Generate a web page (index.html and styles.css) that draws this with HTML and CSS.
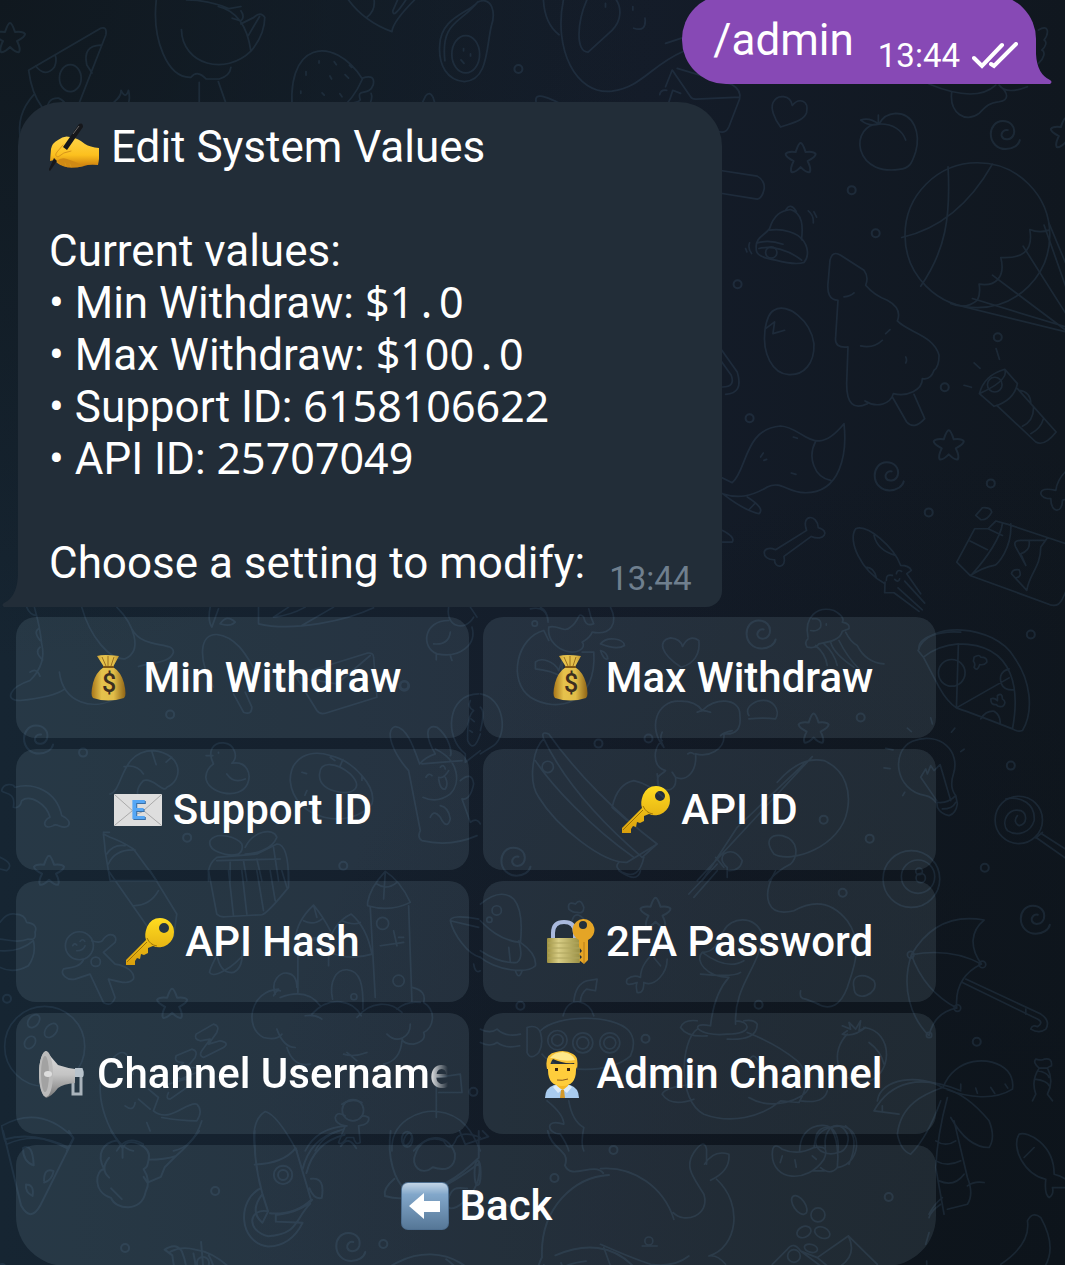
FILE: index.html
```html
<!DOCTYPE html>
<html lang="en">
<head>
<meta charset="utf-8">
<meta name="viewport" content="width=device-width, initial-scale=1">
<title>Admin chat</title>
<link rel="stylesheet" href="styles.css">
</head>
<body>
<svg class="wallpaper" viewBox="0 0 1065 1265" preserveAspectRatio="xMinYMin slice" aria-hidden="true">
  <defs>
    <path id="star" d="M0-15Q2-15 5-6Q13-7 15-4Q15-1 7 3Q11 11 9 14Q6 15 0 9Q-6 15-9 14Q-11 11-7 3Q-15-1-15-4Q-13-7-5-6Q-2-15 0-15Z"/>
    <path id="spiral" d="M2-4C-2-5-5-1-4 2C-2 7 6 6 8 0C10-8 4-13-3-13C-11-13-15-6-15 0C-15 9-8 15 0 15C7 15 13 11 14 6"/>
    <circle id="dot" r="4"/>
    <g id="mandarin"><path d="M0 0C-28-5-48 15-45 45C-40 75-5 85 22 75M0 0C35-20 60 20 50 50Q42 72 22 75M0 0C-12 15-20 30-16 62M0 0C20 15 25 45 22 75"/></g>
  </defs>
  <g>
    <use href="#star" x="10" y="38"/><use href="#star" x="800" y="158"/><use href="#star" x="1065" y="133"/>
    <use href="#star" x="948" y="445"/><use href="#star" x="49" y="870"/><use href="#star" x="172" y="1003"/>
    <use href="#star" x="813" y="728"/><use href="#star" x="655" y="912"/>
    <use href="#spiral" x="1005" y="134"/><use href="#spiral" x="889" y="475"/><use href="#spiral" x="761" y="633"/>
    <use href="#spiral" x="1035" y="918"/><use href="#spiral" x="39" y="738"/><use href="#spiral" x="516" y="860"/><use href="#spiral" x="351" y="1245"/>
    <use href="#dot" x="518" y="69"/><use href="#dot" x="851" y="190"/><use href="#dot" x="875" y="233"/><use href="#dot" x="737" y="284"/>
    <use href="#dot" x="997" y="337"/><use href="#dot" x="944" y="387"/><use href="#dot" x="749" y="418"/><use href="#dot" x="990" y="483"/>
    <use href="#dot" x="928" y="512"/><use href="#dot" x="1030" y="634"/><use href="#dot" x="1010" y="765"/><use href="#dot" x="984" y="867"/>
    <use href="#dot" x="976" y="1041"/><use href="#dot" x="860" y="717"/><use href="#dot" x="598" y="743"/><use href="#dot" x="648" y="738"/>
    <use href="#dot" x="823" y="819"/><use href="#dot" x="869" y="838"/><use href="#dot" x="842" y="892"/><use href="#dot" x="758" y="1004"/>
    <use href="#dot" x="520" y="1005"/><use href="#dot" x="645" y="1038"/><use href="#dot" x="613" y="1149"/><use href="#dot" x="888" y="1196"/>
    <use href="#dot" x="170" y="714"/><use href="#dot" x="83" y="752"/><use href="#dot" x="187" y="837"/><use href="#dot" x="343" y="865"/>
    <use href="#dot" x="404" y="685"/><use href="#dot" x="7" y="998"/><use href="#dot" x="473" y="1091"/><use href="#dot" x="215" y="1190"/>
    <use href="#dot" x="125" y="1247"/><use href="#dot" x="383" y="1243"/><use href="#dot" x="554" y="1177"/><use href="#dot" x="2" y="1267"/>
  </g>
  <!-- pizza, bird, burger, crown, avocado, elephant -->
  <g class="top" transform="scale(.4337)">
    <path d="M66 162L232 65Q247 60 244 80L163 287Q80 270 66 162M82 152Q105 180 125 155Q132 140 127 126M232 104Q190 105 200 150L212 168M110 262Q105 225 135 226Q165 240 150 277M78 218Q35 265 48 325M125 305Q122 270 135 255"/>
    <ellipse cx="162" cy="180" rx="25" ry="31"/>
    <path d="M260 305C270 280 245 270 252 250C255 235 280 230 279 208Q290 230 296 208Q305 245 275 260Q260 270 272 300Q300 285 316 305"/>
    <path d="M360 0C350 90 385 180 440 178Q455 160 475 182H505Q530 175 532 155M418 68C420 150 520 175 578 118C570 60 545 25 503 15M430 0Q480 0 528 20L555 15M578 118Q610 80 610 40Q600 25 585 40L555 55M598 38L572 82M555 25Q565 40 555 48L535 42M459 190V280L405 245L388 260M400 250Q392 270 402 292M405 250Q405 275 418 290M503 188L544 305"/>
    <path d="M803 0Q840 50 903 73Q905 50 955 0M862 0Q865 25 845 40M935 0Q905 45 905 25L916 0"/>
    <path d="M676 275C650 90 770 80 835 182C810 240 760 290 676 280Q660 290 685 305M835 180Q865 170 860 195C850 225 820 200 830 230C820 245 790 225 795 265C790 300 750 280 750 305M855 215Q865 235 810 305M705 165v8M735 140v5M770 142l5 7M805 150l5 5M760 175l4 7M795 172l8 8M693 210v5M742 214l5 5M783 216l5 7M695 245v10M722 248v8"/>
    <path d="M917 305L918 255Q930 240 955 275L980 222Q990 208 998 225L1018 290L1038 263Q1053 258 1049 305M1155 303h14"/>
    <path d="M1013 105C1015 40 1080 30 1100 5C1135-10 1142 30 1132 60C1120 110 1125 185 1070 188C1030 185 1010 150 1013 105M1025 140C1015 50 1060 55 1100 5"/>
    <ellipse cx="1073" cy="125" rx="32" ry="43"/>
    <path d="M1068 112v5M1084 124v5M1062 138l7 8"/>
    <path d="M1252 0Q1255 55 1288 80M1298 0C1275 110 1325 220 1410 210C1480 200 1500 150 1575 118M1352 0C1330 50 1325 120 1355 120L1410 70C1435 45 1430 15 1420 0M1395 8v8M1458 15v8M1460 65Q1490 75 1486 42"/>
    <path d="M1290 305L1235 235Q1232 218 1250 222Q1300 235 1385 305M1265 270l6-10M1298 265l8-18M1325 305l6-12M1518 305L1550 208L1568 215M1520 218Q1522 206 1536 208"/>
  </g>
  <!-- envelope, heart, bell, peach, basketball -->
  <g class="detail" transform="translate(665 0) scale(.3333)">
    <path d="M0 130L55 112M0 260L20 210L75 290Q80 298 92 297L222 291M35 205L200 254Q228 270 222 297L190 380Q180 402 160 394"/>
    <path d="M345 381C325 355 315 325 322 308C335 280 375 285 380 316C400 292 430 300 423 337C415 362 380 368 345 381Z"/>
    <path d="M170 512L275 528Q297 540 296 565Q290 595 275 597L170 580"/>
    <path d="M272 745C268 710 300 705 312 685C325 645 345 632 375 628C412 640 412 680 408 715C430 740 430 770 415 787C390 795 360 788 330 780C290 772 270 765 272 745M312 690C350 683 400 700 410 720M275 728Q310 718 352 732M280 745C320 735 370 750 408 780M360 630Q375 605 392 634M428 632Q445 645 443 668M445 635l8 16M252 728Q246 745 258 760M240 745l4 10"/>
    <circle cx="317" cy="757" r="17"/>
    <path d="M640 372C600 370 575 410 585 450C600 500 650 515 700 508C735 505 740 485 750 455C765 400 745 340 690 340Q655 342 640 372C680 370 710 390 720 420M640 372Q610 380 585 360Q610 350 640 372M638 345V370"/>
    <path d="M790 252Q930 310 990 255M858 275C850 340 900 370 940 340C960 320 965 310 1000 305C1030 300 1030 280 1000 255Q1020 285 1085 260M1118 90C1150 70 1150 100 1135 120C1145 125 1140 140 1128 150C1140 155 1135 175 1118 190"/>
    <circle cx="935" cy="705" r="217"/>
    <path d="M847 500C855 650 840 750 765 858M980 492C930 580 850 680 708 712M1150 690Q1120 700 1092 688C1105 760 1060 775 1005 772C1020 830 990 860 940 852Q945 880 935 900Q900 930 855 910M1135 675L1200 860M1072 738L1200 940M980 825L1200 990M920 895L1200 980M855 910L1200 995M1150 670L1200 790"/>
  </g>
  <!-- tree, egg, torch, moustache, bone, squid, crisps -->
  <g class="detail" transform="translate(700 280) scale(.3333)">
    <path d="M383 0L388-60Q395-90 420-75L490-30Q505-10 495 15Q520 45 560 60Q605 85 590 122C620 155 700 165 715 225Q715 260 700 270Q690 300 665 295C665 330 620 350 578 340C570 370 530 385 493 362M500 370Q438 400 438 310L442 200Q400 205 405 170L412 60Q375 60 383 0M480 197Q520 205 545 180M555 160L568 148M430 50Q450 48 460 38M615 230q5 10 0 18M575 350L618 425Q640 450 672 415L640 342"/>
    <path d="M220 90C260 65 330 120 340 190C342 250 310 285 265 283C215 280 185 220 193 150Q200 100 220 90M195 145L222 125L217 160L252 150"/>
    <path d="M60 205L110 275Q130 340 75 342M60 240L92 285Q105 320 66 320"/>
    <path d="M836 340Q850 285 912 267L950 310Q940 360 880 378ZM912 267Q925 300 836 340M888 375L1005 485Q1030 500 1066 455L950 325M955 330Q990 335 990 370M998 380Q1000 420 965 438M1028 415Q1020 445 990 460M886 205l10 32M820 248l18 16M790 315l22 6"/>
    <circle cx="882" cy="313" r="22"/>
    <path d="M60 590L95 607C140 570 130 445 240 437C310 440 340 540 430 430C440 520 420 640 310 637C260 635 240 600 200 620C150 650 110 655 66 640M345 483C320 530 340 590 390 600M66 640Q130 690 175 700Q195 685 140 650M162 670L145 688M180 530l8-12M190 540l8-3M278 470l12 4M272 578l14 4M66 750Q105 770 95 785H66"/>
    <path d="M225 808L318 750C300 700 350 700 353 742C390 750 370 785 332 768L250 828C260 865 220 865 222 838C180 840 180 790 225 808"/>
    <path d="M553 910C480 870 440 780 465 745C500 730 580 800 600 855Q625 855 632 870L618 880L660 940M520 765Q530 810 585 825M495 860Q520 860 527 892M553 905L552 937H580L655 993M592 922L665 988M612 902L672 968M557 900Q555 880 575 885M587 880Q590 865 603 873M582 897Q593 908 597 895"/>
    <path d="M808 885L768 845L822 745H862L885 722L922 732L1035 770L1110 795M808 885L1040 970Q1070 985 1085 955L1110 900M930 730C935 800 890 855 880 855Q850 860 808 885M905 730C900 770 860 830 815 880M862 745L905 765M808 782L860 808M825 705L845 682Q870 680 873 695Q860 720 840 718ZM1040 772L1020 800C1020 860 985 880 978 930L932 880Q935 865 955 868Q965 890 945 892M975 855L945 800Q935 780 960 780H1030M975 855L960 820Q990 810 985 782"/>
    <path d="M1110 560Q1070 590 1065 630Q1020 620 1020 640Q1025 655 1050 655C1050 700 1085 700 1085 660L1110 650"/>
  </g>
  <!-- planes, ice lolly, letter, duckling, doughnut, rabbit, rainbow -->
  <g class="detail" transform="translate(0 560) scale(.3333)">
    <path d="M80 140Q90 165 110 165M103 140Q120 200 125 250Q140 310 90 360C30 380 10 420 60 420Q160 410 195 385M115 205q-15 10 5 35M120 260q-18 15 8 38M90 335q20-15 30 12M245 140C270 230 330 300 375 295C430 270 400 190 350 140M395 205C430 270 520 240 520 275C510 310 450 305 415 318M178 335C190 430 280 450 345 415"/>
    <path d="M630 140Q622 180 635 200L655 145M775 140V190C880 215 1040 180 1120 142M820 170L865 140M820 170Q870 165 915 140M905 195L1000 140M660 190Q680 160 705 185Q690 200 660 190"/>
    <path d="M640 380C590 290 600 220 650 222C720 230 750 310 765 330M700 400L730 455Q755 465 755 440L735 395M885 345L1100 278Q1120 275 1120 290L1130 410L985 455Q960 465 950 450L885 345M890 350L1010 370L1110 285"/>
    <path d="M1345 140C1335 200 1395 215 1420 170M1410 140L1430 170M1345 180C1270 180 1260 260 1310 280C1380 295 1430 250 1415 200M1300 250Q1345 255 1350 215M1308 280v18M1350 285l5 15"/>
    <circle cx="1212" cy="376" r="15"/>
    <path d="M330 700C370 690 360 570 460 570C550 580 550 660 500 680C490 700 460 650 430 660Q400 690 420 720M372 618Q410 610 430 640M455 572L468 612M515 590L498 605"/>
    <path d="M640 610C620 570 640 545 670 547C705 550 715 590 695 608C740 600 755 640 742 670C720 720 620 700 617 650Q618 625 640 610M618 585h20M680 640Q700 670 735 655M655 575v2"/>
    <path d="M870 660C870 590 930 565 990 585C1060 600 1130 680 1115 730C1050 810 880 780 870 660M958 640C960 600 1010 605 1050 640C1090 680 1060 700 1020 695C980 690 955 670 958 640M905 635l14 4M990 590l14 10M1020 615l8-18M1085 645v14M920 690l-6 14M1010 745l14-4M1080 720h18"/>
    <path d="M1225 630C1180 580 1150 510 1185 498C1220 500 1240 560 1258 610Q1275 590 1305 580C1270 520 1280 490 1310 500C1350 530 1355 580 1350 585M1305 565C1380 600 1380 670 1350 700Q1310 730 1268 710M1225 630L1260 810Q1250 830 1265 840Q1350 860 1430 825M1380 660Q1415 630 1420 670Q1410 720 1385 715L1410 785Q1430 770 1440 790M1290 770Q1300 745 1320 770Q1340 810 1350 775Q1345 740 1320 735M1277 650q8-15 18-5M1320 620q10-12 15 5M1315 650Q1330 655 1345 630M1315 655Q1320 690 1335 685Q1345 670 1335 650M1265 610L1385 600"/>
    <path d="M1435 400C1340 400 1330 530 1395 580V605L1440 570M1410 420Q1400 440 1420 450Q1400 465 1402 540Q1420 580 1440 520M1412 475l10 8M1408 510l8 5"/>
    <path d="M40 740C50 690 5 700 5 690C10 665 40 670 45 680C100 665 170 690 185 765Q215 780 205 795C190 810 170 785 160 795C130 810 125 780 150 770C140 730 90 700 65 720Q60 745 40 740"/>
    <path d="M315 870L330 960L470 960L400 865Q360 840 330 830L310 820Q315 860 315 870M320 880Q340 850 375 855M325 910Q345 865 405 868M310 815h18"/>
    <path d="M625 930Q630 905 650 890L770 880L830 850Q865 850 865 960M625 960V930M715 880C680 890 620 870 630 840C650 810 710 830 725 850Q730 870 715 880M735 860C760 810 820 800 830 830C815 870 760 880 735 880M650 900L840 895M690 905V960M730 900L740 960M770 895L785 960M820 860L835 960M0 890Q45 910 20 930L0 925"/>
  </g>
  <!-- cauldron, jellyfish, cloud, canoe, guitar, fishing rod -->
  <g class="detail" transform="translate(480 600) scale(.3333)">
    <path d="M150 25Q200 15 203 65M180 20Q200 30 203 60M190 90C110 110 80 240 150 290C230 340 350 310 340 155M340 155H305M190 90L205 120M205 80C230 70 250 100 270 80C300 60 290 30 310 50Q315 80 340 70Q330 50 325 25M335 95C390 105 415 70 390 20M205 80Q200 120 240 145C290 170 320 140 305 125Q330 110 335 95M165 185C180 170 220 180 235 210L245 180V230Q215 210 165 205ZM360 130C380 105 430 115 432 135Q410 150 360 130M360 150Q380 155 382 175Q370 180 360 150"/>
    <circle cx="163" cy="69" r="8"/>
    <path d="M602 200C540 160 530 120 570 112Q600 115 606 138Q625 100 655 120C660 160 640 190 602 200"/>
    <path d="M982 110C970 50 1010 15 1060 30Q1095 50 1085 65Q1110 70 1105 85L1085 92C1080 120 1040 125 1015 130Q1005 145 980 140Q970 125 982 115M995 55Q1025 50 1020 80Q1010 95 990 90M1037 70v4M1005 135Q1035 160 1040 195M1030 130Q1060 155 1070 195M1050 125Q1060 160 1120 200M1075 120Q1100 170 1135 205M1095 95Q1110 125 1130 135Q1155 185 1210 190"/>
    <path d="M550 440C500 380 530 300 595 302Q645 300 665 330C700 290 780 290 778 345Q785 405 730 400C735 450 680 470 645 460C650 510 620 545 585 530C590 570 560 575 535 560C520 520 550 520 555 510Q520 500 525 455Q530 430 545 420M550 440Q535 415 545 395M650 335Q665 325 690 335M755 390Q730 395 720 405M535 560L530 520M640 460Q630 452 622 460M585 530l-10-15M805 345Q790 320 830 302C880 290 900 330 885 355Q850 350 805 355"/>
    <path d="M190 415Q180 390 205 400C290 520 410 640 530 730L485 770C380 680 260 560 190 415C160 440 140 540 175 590C230 680 370 790 440 785L530 730M165 480C210 550 330 680 460 770M395 620Q410 550 460 540Q510 550 560 600M395 620L440 660M415 785Q400 800 425 815Q475 840 490 770"/>
    <circle cx="202" cy="499" r="17"/>
    <path d="M650 840L995 468M665 840L770 680L970 490M890 545Q960 465 1030 480C1100 510 1110 580 1100 630C1080 740 930 790 880 760C850 720 870 700 905 705C960 720 950 770 930 790Q890 810 865 840M705 770L730 800M740 800Q715 780 730 760Q760 740 785 780Q780 810 745 810M740 830v-30"/>
    <path d="M0 280C70 290 85 400 40 435L0 460M0 320Q15 330 0 390"/>
    <path d="M1315 145C1310 110 1380 90 1440 95"/>
  </g>
  <!-- pizza wedge, bulb, lollipop, eight ball, umbrella, palm, sweet -->
  <g class="detail" transform="translate(860 600) scale(.3333)">
    <path d="M188 170L172 150C200 60 400 70 460 170C510 240 520 330 485 390Q470 395 455 385C475 280 470 130 293 130Q230 135 188 170L235 260Q260 305 287 322Q340 340 455 385M293 130L287 322L445 232M445 205Q410 215 422 250Q430 270 460 268M360 355Q375 330 400 332Q420 345 418 368M340 170Q355 160 360 170Q380 170 378 185Q370 195 357 192Q350 215 340 200Q345 190 338 182ZM410 285Q425 275 425 295Q440 305 425 318Q410 320 407 312Q390 315 390 295Q400 290 410 300Z"/>
    <circle cx="273" cy="217" r="40"/>
    <path d="M225 605Q215 590 195 585C100 570 90 450 155 422C240 390 300 455 278 520Q265 560 285 585M228 600L180 530L195 505L200 520L210 495L220 510L238 492L270 600M228 605Q260 610 285 585L290 610Q285 640 265 645Q240 640 230 620ZM245 625Q275 625 285 605M75 443l22 5M70 502l18 2M132 575l-6 10M282 383l-10 12M310 446l-10 7M140 383l12 10M210 352l5 18"/>
    <circle cx="474" cy="658" r="71"/>
    <path d="M470 645Q455 665 475 675C500 670 500 640 480 630C440 620 420 665 440 690C470 710 510 695 520 660C525 610 480 585 435 595M540 698L625 752M528 712L625 780M525 712L545 695"/>
    <circle cx="152" cy="835" r="85"/><circle cx="172" cy="828" r="50"/><circle cx="175" cy="812" r="10"/><circle cx="180" cy="832" r="14"/>
    <path d="M152 1062C200 980 270 940 370 958C330 990 325 1040 362 1090Q280 1130 288 1222Q220 1235 205 1305C150 1250 120 1160 152 1062Q270 1040 362 1090M152 1062Q190 1170 288 1222M315 1135L540 1240Q570 1260 555 1285Q535 1300 510 1285Q515 1270 530 1278Q550 1265 530 1255L305 1145M495 1225v15"/>
    <circle cx="150" cy="1062" r="10"/><circle cx="365" cy="1091" r="10"/><circle cx="290" cy="1222" r="10"/><circle cx="205" cy="1303" r="8"/>
    <path d="M247 1460C280 1370 390 1360 440 1410Q460 1435 455 1465C400 1500 320 1490 260 1467M300 1450v15M345 1462l5 15M390 1460l12 18M433 1450l8 12M525 1375Q545 1380 550 1375Q575 1370 572 1395Q560 1400 560 1402Q580 1440 560 1480L575 1500M560 1402H535Q515 1385 525 1375M535 1402Q510 1440 525 1480L515 1500M530 1410Q560 1415 565 1430M522 1435Q560 1440 565 1455"/>
    <path d="M245 1460C180 1420 60 1430 50 1500M245 1460C190 1480 120 1510 110 1600Q120 1650 150 1660Q200 1610 240 1500M245 1460Q320 1480 385 1560Q405 1610 385 1640Q320 1640 270 1550M260 1490Q230 1600 225 1700L250 1840M280 1560L320 1730Q340 1780 320 1810L260 1825M225 1620Q255 1640 285 1620M225 1680Q260 1700 300 1680M235 1740Q280 1760 310 1720M320 1755Q340 1740 370 1745M245 1790Q220 1810 205 1840"/>
    <path d="M475 1600C500 1590 580 1630 580 1720Q600 1725 615 1735M475 1600C450 1640 490 1720 555 1735Q550 1780 565 1790Q580 1780 575 1760L615 1760M490 1670L520 1640"/>
    <path d="M500 1860Q515 1830 540 1850Q590 1940 550 2000M500 1860Q510 1930 420 1990"/>
  </g>
  <!-- castle, gingerbread, cupcake, planet, moon, sleeper, astronaut -->
  <g class="detail" transform="translate(0 870) scale(.3333)">
    <path d="M325 0L440 165M450 0L530 130L520 200M400 105Q450 105 475 60M625 0L650 130Q660 140 675 138L785 132Q800 130 865 50V0M685 0L700 135M725 0L740 130M770 0L790 120M810 0L825 90M845 0L860 50"/>
    <path d="M0 155Q20 125 45 130Q75 130 80 155Q115 160 105 185Q110 210 85 205C50 220 20 205 0 205M0 240Q60 245 100 210Q110 250 85 285Q40 310 0 290"/>
    <circle cx="238" cy="225" r="42"/><circle cx="287" cy="273" r="14"/>
    <path d="M275 210Q305 220 310 205C330 180 355 195 345 215L310 245Q335 270 345 280C380 285 405 305 400 325C385 345 350 330 325 325L345 380Q335 410 310 395L270 310L225 325C200 330 180 310 190 295C200 290 235 295 250 268M218 225q5-10 12-2M240 212q8-10 14 0M230 240Q250 240 255 225"/>
    <path d="M660 235Q630 290 628 305C640 325 700 290 735 245M650 250Q660 310 700 305Q730 290 725 240"/>
    <path d="M893 365V210Q930 210 950 205M885 205Q890 150 940 103Q970 140 990 180M890 195Q930 210 975 195M910 150Q940 165 965 145M940 103L950 140M985 285V220Q1000 155 1053 130Q1100 170 1115 250Q1050 270 990 245M1025 150Q1060 165 1080 155M1102 95Q1110 50 1155 2Q1200 30 1230 95Q1170 125 1102 105ZM1130 40Q1160 60 1190 35M1155 5L1150 85M1110 110L1125 380M1225 105L1235 395M997 385C985 330 1010 295 1040 297C1080 300 1090 340 1088 415M1140 225L1210 215M1180 180L1190 225M1195 200h15"/>
    <circle cx="1147" cy="158" r="18"/><circle cx="1195" cy="330" r="17"/><circle cx="1061" cy="378" r="9"/>
    <path d="M825 370C810 330 840 305 860 307Q890 310 890 350M835 355C750 360 730 470 790 500Q830 510 845 490M820 375Q830 355 840 360M840 380Q920 350 960 405M915 435Q945 430 965 445M935 430C990 370 1060 390 1083 435M1070 440C1110 390 1170 390 1205 425M1190 415Q1220 390 1260 395M1235 350Q1280 360 1270 395C1310 420 1300 470 1270 485Q1280 510 1240 520Q1210 520 1205 505M1160 490C1190 520 1230 500 1230 460M830 475Q850 530 885 530M860 530Q880 590 930 580M1205 510Q1200 570 1150 580M1030 550Q1060 560 1100 545M1040 545L1070 570"/>
    <path d="M1435 145Q1350 130 1350 150C1360 190 1400 250 1440 260M1350 150L1435 170M1420 280Q1425 310 1440 300"/>
    <circle cx="134" cy="527" r="120"/>
    <ellipse cx="101" cy="451" rx="15" ry="22" transform="rotate(40 101 451)"/><ellipse cx="153" cy="479" rx="16" ry="24" transform="rotate(40 153 479)"/><ellipse cx="90" cy="515" rx="15" ry="20" transform="rotate(35 90 515)"/>
    <path d="M588 490L640 460Q660 465 650 485L625 520L660 510Q690 515 670 530L610 560Q595 555 605 540L630 505L600 510Q580 505 588 490M528 555L575 535Q595 540 585 560L560 590L580 590Q600 590 590 605L540 625Q520 615 530 600L550 575Q520 575 528 555M505 640L555 625Q575 630 560 650L510 685Q495 685 505 665"/>
    <path d="M340 560Q370 530 385 560L400 610M305 610C285 700 340 830 400 840M375 705Q400 725 405 695M445 655L475 680L460 720C510 760 560 690 590 700Q610 720 590 750Q540 750 485 740M440 755L450 780M605 750Q580 830 520 840M415 685L450 715M350 840Q380 790 430 820"/>
    <path d="M5 765Q120 700 220 800L200 840M5 765Q10 800 20 820Q110 780 205 830M765 840Q750 750 795 722Q830 730 890 840M915 840Q950 770 1040 765M945 840Q970 790 1030 775"/>
    <circle cx="1058" cy="718" r="32"/>
    <path d="M1035 735Q1010 720 1005 740Q1005 760 1035 765L1015 815Q1025 825 1040 800H1060Q1065 825 1080 815L1075 765Q1110 760 1105 740Q1090 730 1080 740M1025 700Q1055 680 1085 695M1175 840C1170 750 1260 715 1310 722C1390 730 1420 790 1440 840M1308 640V740M1310 620L1380 610L1385 665L1315 665M1240 840Q1280 790 1330 810Q1350 850 1370 800Q1390 780 1440 800"/>
    <ellipse cx="1222" cy="805" rx="10" ry="20" transform="rotate(25 1222 805)"/>
  </g>
  <!-- ufo, carrot, submarine, swan, strawberry -->
  <g class="detail" transform="translate(480 870) scale(.3333)">
    <path d="M0 100Q60 50 100 85Q130 120 120 215C60 210 20 170 0 150M120 215Q170 250 165 285C140 310 50 300 0 260M115 210Q130 260 110 275Q60 280 0 240M105 300Q115 330 125 300M85 230l5 45"/>
    <circle cx="49" cy="119" r="14"/><circle cx="27" cy="147" r="8"/>
    <path d="M265 115Q260 90 285 100Q300 80 310 110Q310 130 290 125Q275 125 265 115M275 150Q285 115 315 150M560 265C560 310 520 350 490 335Q490 370 470 365Q465 345 470 335Q430 350 440 325Q460 310 480 320C480 290 500 260 530 240M520 260L540 285M625 70L710-20M640 80L710 0"/>
    <path d="M885 0C840 80 860 140 940 120C1010 80 1060 100 1100 150C1150 220 1120 290 1100 350Q1070 430 1010 400M1120 350C1110 310 1150 305 1180 330C1200 370 1120 400 1120 350M960 360Q955 385 975 385L1015 400M415 0Q470 40 480 0"/>
    <path d="M140 470Q170 460 180 485Q190 520 175 545Q150 570 140 545ZM180 480C230 430 400 430 445 480Q470 510 450 555C390 610 230 610 185 550M248 435Q260 390 295 393Q330 400 340 435M280 393Q285 340 320 330L350 325L345 360L318 355Q300 370 300 393M0 475Q30 490 50 475Q75 500 120 490M0 515Q30 530 50 515Q75 535 118 525"/>
    <circle cx="231" cy="508" r="29"/><circle cx="231" cy="508" r="17"/><circle cx="307" cy="516" r="30"/><circle cx="307" cy="516" r="18"/><circle cx="388" cy="516" r="30"/><circle cx="388" cy="516" r="18"/>
    <path d="M690 465Q700 370 745 320C680 320 640 270 665 245C700 245 710 220 730 180C750 140 820 130 845 190C840 290 760 340 765 460M665 245Q740 300 790 270M660 310Q760 320 780 305M690 465C620 450 650 500 740 490C820 490 810 450 765 450M650 475C600 510 590 690 670 730C750 760 840 740 900 690L955 695Q1000 620 950 570Q890 520 800 485M600 470Q610 445 650 450M600 470Q620 500 680 495M740 505Q830 510 830 460Q820 445 790 450M805 680C870 720 970 690 985 650M960 690Q1030 700 1040 660M545 670Q550 650 640 640M545 670Q570 710 640 685M805 570Q820 540 835 575"/>
    <path d="M1100 490C1050 540 1060 630 1150 635C1240 620 1240 480 1150 470M1085 465L1110 475L1105 455L1125 475L1140 450L1135 480L1155 470Q1120 500 1085 490L1100 480M1165 515Q1200 540 1210 580"/>
    <path d="M200 690Q250 730 250 760C190 740 200 790 240 790Q260 820 265 840M265 690Q275 750 310 770Q300 820 310 840M1180 720C1230 630 1320 610 1440 660M1180 720L1255 730M1205 705v20"/>
    <use href="#mandarin" x="1050" y="770"/>
  </g>
  <!-- rocket, tree, earth, mushroom, hotdog -->
  <g class="low" transform="translate(0 1130) scale(.3827)">
    <path d="M8 0L55 195Q80 240 105 195L192 20L180 0M12 22Q90 0 175 45M60 45Q85 30 88 90Q60 80 60 45M115 130Q115 95 140 105Q135 130 115 135M68 140Q90 140 85 170Q65 160 68 140"/>
    <path d="M290 0L320 45Q330 20 365 35Q395 50 388 75Q430 75 460 65Q490 40 520 0M320 45V70M388 75C385 90 385 95 375 100Q395 130 380 160C370 215 300 205 290 175C240 160 250 100 272 100C250 60 270 30 305 25M285 70Q260 100 285 122M290 150L318 178M385 135L420 120L430 95L460 65M375 120L385 135"/>
    <path d="M665 0Q660 100 700 210C650 200 640 260 700 275C780 270 770 230 810 190M772 45L812 180Q770 220 705 215M665 88Q740 85 772 45M680 150C620 180 620 290 700 302Q760 300 790 240L720 237V220Q790 210 815 180M812 125Q850 120 840 175Q820 180 808 150M790 100Q810 20 885 0M800 110Q820 30 900 10M890 40Q910 10 930 45M685 165Q650 210 685 240L700 210"/>
    <circle cx="739" cy="115" r="24"/><circle cx="739" cy="115" r="13"/>
    <path d="M1020 0C1010 70 1030 130 1060 155Q1150 170 1250 70V0M1030 125Q1000 150 1005 170Q1100 200 1250 85M1085 60C1100 10 1170 0 1188 60C1190 100 1160 105 1130 95C1100 120 1070 90 1085 60M1200 0L1215 35L1275 15L1260 0M1250 80C1270 170 1150 240 1170 180C1180 140 1200 150 1220 150"/>
    <ellipse cx="1063" cy="22" rx="14" ry="20"/><ellipse cx="1247" cy="110" rx="8" ry="32"/>
    <path d="M1430 0C1440 50 1490 50 1475 90C1490 130 1550 80 1575 110M430 310Q460 290 475 315Q490 350 490 405M430 310L450 325Q455 370 470 405M445 315Q475 300 510 310Q580 320 640 405M505 320Q515 360 510 405M525 290L530 350M545 325Q570 370 555 405M590 350Q580 380 585 405"/>
    <circle cx="530" cy="345" r="16"/>
    <path d="M110 400C130 340 220 340 238 405M120 375Q145 380 135 400M210 370Q215 400 230 405M960 405C1060 290 1200 300 1260 405M1165 335Q1200 360 1230 405M1135 390l14-16M1415 330C1410 200 1500 120 1590 115M1415 330Q1390 380 1415 405M1450 325C1530 290 1600 300 1650 350M1420 350L1440 405Q1440 350 1530 340M1465 345L1480 390M1280 200Q1340 175 1345 230"/>
  </g>
  <!-- whale, seeds, gift -->
  <g class="detail" transform="translate(600 1100) scale(.3333)">
    <path d="M0 203C100 195 190 260 220 355M218 335C250 370 330 345 310 280C280 230 250 200 280 155Q310 110 318 145V190M312 190Q340 145 385 160Q390 210 330 238M348 235C430 310 410 440 325 465Q350 460 375 490M0 430Q90 470 150 490Q220 500 265 465M10 440L30 495M125 435h45"/>
    <circle cx="145" cy="420" r="12"/>
    <path d="M515 160Q515 120 545 145Q590 165 640 140Q690 130 670 175C620 250 515 240 515 160M545 165l-6 20M583 177l4 22M635 165l12 10M597 150C600 70 670 65 690 80C790 50 790 190 710 200Q690 225 660 200M640 140Q645 90 690 80C710 110 715 160 710 200M735 75Q780 110 745 190M635 210H670"/>
    <ellipse cx="596" cy="312" rx="17" ry="32" transform="rotate(-35 596 312)"/><ellipse cx="610" cy="393" rx="22" ry="16" transform="rotate(-25 610 393)"/><ellipse cx="665" cy="395" rx="24" ry="16" transform="rotate(25 665 395)"/><ellipse cx="631" cy="442" rx="20" ry="12" transform="rotate(15 631 442)"/><circle cx="652" cy="342" r="21"/><circle cx="580" cy="465" r="19"/>
    <path d="M515 490L560 445Q580 420 600 450L650 470L743 405L830 490M650 470L680 495M743 405Q770 460 720 495M600 450L660 495M985 350Q990 330 1020 310M975 430L985 395M978 480v15"/>
  </g>
</svg>

<main class="chat">
  <article class="bubble bubble-out">
    <p class="text">/admin</p>
    <footer class="meta"><time>13:44</time>
      <svg class="ticks" viewBox="0 0 46 28" role="img" aria-label="Read"><path d="M2 16L10 24L30 3M19 22L22 24L44 2"/></svg>
    </footer>
    <svg class="tail tail-out" viewBox="0 0 16 40" aria-hidden="true"><path d="M0 0V40H14Q17 38 14 36Q1 30 0 10Z"/></svg>
  </article>

  <article class="bubble bubble-in">
    <div class="text">
      <p class="title"><svg class="emoji" viewBox="0 0 50 48" aria-hidden="true">
        <defs><linearGradient id="skin" x2="0" y2="1"><stop offset="0" stop-color="#ffd54a"/><stop offset=".6" stop-color="#fcc01e"/><stop offset="1" stop-color="#c8780c"/></linearGradient></defs>
        <path fill="url(#skin)" d="M1 38L2 26Q3 20 9 17Q15 12 21 14Q29 15 36 21Q41 24 50 25Q51 33 49 42Q40 41 35 43Q22 46 14 43Q8 41 6 37Z"/>
        <path fill="#d08a14" d="M8 38Q12 34 18 36Q28 39 35 43Q22 46 14 43Z"/>
        <path fill="none" stroke="#d8951a" stroke-linecap="round" d="M14 22L8 29Q5 33 9 34Q14 29 22 28M17 43L16 40M22 44L21 41"/>
        <path fill="#16171b" d="M14 24L30 1Q34-1 34 4L18 27ZM5 35L8 38L1 48Q0 48 0 46Z"/>
        <path stroke="#666" d="M24 11L30 3"/>
      </svg>Edit System Values</p>
      <p class="blank"></p>
      <p>Current values:</p>
      <p>• Min Withdraw: <code>$1<i>.</i>0</code></p>
      <p>• Max Withdraw: <code>$100<i>.</i>0</code></p>
      <p>• Support ID: <code>6158106622</code></p>
      <p>• API ID: <code>25707049</code></p>
      <p class="blank"></p>
      <p>Choose a setting to modify:</p>
    </div>
    <footer class="meta"><time>13:44</time></footer>
    <svg class="tail tail-in" viewBox="0 0 16 40" aria-hidden="true"><path d="M16 0V40H2Q-1 38 2 36Q15 30 16 8Z"/></svg>
  </article>

  <svg class="sprites" aria-hidden="true">
    <defs>
      <linearGradient id="gold"><stop offset="0" stop-color="#a8761a"/><stop offset=".3" stop-color="#e6c24c"/><stop offset=".65" stop-color="#e2bd48"/><stop offset="1" stop-color="#8f6416"/></linearGradient>
      <linearGradient id="brass"><stop offset="0" stop-color="#9d9040"/><stop offset=".35" stop-color="#d8cd85"/><stop offset="1" stop-color="#9a9045"/></linearGradient>
      <linearGradient id="yellow" x2="0" y2="1"><stop offset="0" stop-color="#ffdc20"/><stop offset="1" stop-color="#d99e0c"/></linearGradient>
      <linearGradient id="silver" x2="0" y2="1"><stop offset="0" stop-color="#ddd"/><stop offset=".5" stop-color="#c4c4c4"/><stop offset="1" stop-color="#777"/></linearGradient>
      <linearGradient id="blue" x2="0" y2="1"><stop offset="0" stop-color="#c3d5e6"/><stop offset=".25" stop-color="#82a7ca"/><stop offset="1" stop-color="#567797"/></linearGradient>
      <linearGradient id="hair" x2="0" y2="1"><stop offset="0" stop-color="#fff0a0"/><stop offset="1" stop-color="#f2b51b"/></linearGradient>
    </defs>
    <symbol id="bag" viewBox="0 0 48 48">
      <path fill="url(#gold)" d="M12 2Q18 0 34 2L28 13Q36 18 39 29Q42 42 39 44Q23 49 8 44Q5 42 8 29Q11 18 19 13Z"/>
      <path fill="none" stroke="#7e5715" stroke-width="2" d="M18 13H29"/>
      <path fill="none" stroke="#9b7020" d="M17 3L21 12M23 2V12M29 3L26 12"/>
    </symbol>
    <symbol id="mail" viewBox="0 0 48 48">
      <rect y="8" width="48" height="32" rx="1" fill="#dedede"/>
      <path fill="none" stroke="#aaa" d="M1 9L20 26Q24 29 28 26L47 9M1 39L18 25M47 39L30 25"/>
    </symbol>
    <symbol id="key" viewBox="0 0 48 48">
      <path fill="url(#yellow)" fill-rule="evenodd" d="M34 0A14 14 0 0 1 48 14A15 15 0 0 1 27 28L22 30L22 35L18 37L15 36L14 41L11 40L9 43V47H0V42L20 22Q18 17 21 9Q25 0 34 0M38 5A5 5 0 1 0 38 15A5 5 0 1 0 38 5Z"/>
      <path fill="none" stroke="#9d7306" d="M1 44L21 24M21 20Q24 27 31 28"/>
    </symbol>
    <symbol id="lock" viewBox="0 0 48 48">
      <path fill="none" stroke="#a9b9dd" stroke-width="4" d="M6 21V15Q6 4 17 4Q28 4 28 15V21"/>
      <rect y="20" width="33" height="25" rx="1" fill="url(#brass)"/>
      <path stroke="#b0a660" d="M1 25H33M1 30H33M1 35H33M1 40H33"/>
      <path fill="#e5a526" fill-rule="evenodd" d="M36 1A11 11 0 0 1 41 22V42L37 46L32 42L35 39L32 36L35 33L32 29V22A11 11 0 0 1 36 1M36 3A4 4 0 1 0 36 11A4 4 0 1 0 36 3Z"/>
      <path stroke="#b87c18" d="M37 24V45"/>
    </symbol>
    <symbol id="horn" viewBox="0 0 48 48">
      <path fill="none" stroke="#aab4bc" stroke-width="3" d="M35 27V44H43V18"/>
      <path fill="url(#silver)" d="M8 1Q14 8 20 15Q29 18 37 19V33Q25 34 20 38Q14 46 8 48Q1 42 1 24Q1 6 8 1Z"/>
      <ellipse cx="8" cy="24" rx="7" ry="23" fill="#bbb"/><ellipse cx="7" cy="24" rx="4" ry="18" fill="#a2a2a2"/>
      <ellipse cx="10" cy="24" rx="4" ry="3" fill="#ddd"/>
      <path fill="#b8c3cc" d="M37 18H44Q47 22 45 27H37Z"/>
    </symbol>
    <symbol id="man" viewBox="0 0 48 48">
      <path fill="#a9ccef" d="M7 48Q7 38 16 35H32Q41 38 41 48Z"/>
      <path fill="#f5b722" d="M19 31H30V37L25 40L19 37Z"/>
      <path fill="#dcebf9" d="M18 35L24 40L20 43L15 37ZM31 35L25 40L29 43L34 37Z"/>
      <path fill="#d49a2a" d="M23 40H26L27 48H22Z"/>
      <path fill="#ffcd3c" d="M10 14H38V20Q38 36 24 36Q10 36 10 20Z"/>
      <path fill="#f7c236" d="M9 19Q6 4 18 2Q27-1 35 4Q41 7 39 19L36 13Q25 14 15 9Q12 12 12 19Z"/>
      <path fill="#ffe88a" d="M12 8Q16 2 25 2Q34 3 37 10Q25 12 15 8Z"/>
      <path fill="#3b2410" d="M17 18H20V21H17ZM29 18H32V21H29Z"/>
      <path fill="none" stroke="#8a5a1c" d="M19 30Q24 31 30 29"/>
    </symbol>
    <symbol id="arrow" viewBox="0 0 48 48">
      <rect width="48" height="48" rx="7" fill="#4e6f90"/><rect x="1" y="1" width="46" height="46" rx="6" fill="url(#blue)"/>
      <path fill="#fff" d="M8 24L23 11V19H39V30H23V37Z"/>
    </symbol>
  </svg>

  <nav class="keyboard" aria-label="Settings">
    <button type="button"><svg class="emoji" viewBox="0 0 48 48" aria-hidden="true"><use href="#bag"/><text class="bag-sign" x="24" y="38">$</text></svg><span>Min Withdraw</span></button>
    <button type="button"><svg class="emoji" viewBox="0 0 48 48" aria-hidden="true"><use href="#bag"/><text class="bag-sign" x="24" y="38">$</text></svg><span>Max Withdraw</span></button>
    <button type="button"><svg class="emoji" viewBox="0 0 48 48" aria-hidden="true"><use href="#mail"/><text class="mail-sign" x="24" y="33">E</text></svg><span>Support ID</span></button>
    <button type="button"><svg class="emoji" aria-hidden="true"><use href="#key"/></svg><span>API ID</span></button>
    <button type="button"><svg class="emoji" aria-hidden="true"><use href="#key"/></svg><span>API Hash</span></button>
    <button type="button"><svg class="emoji" aria-hidden="true"><use href="#lock"/></svg><span>2FA Password</span></button>
    <button type="button" class="fade"><svg class="emoji" aria-hidden="true"><use href="#horn"/></svg><span>Channel Username</span></button>
    <button type="button"><svg class="emoji" aria-hidden="true"><use href="#man"/></svg><span>Admin Channel</span></button>
    <button type="button" class="wide"><svg class="emoji" aria-hidden="true"><use href="#arrow"/></svg><span>Back</span></button>
  </nav>
</main>
</body>
</html>
```
FILE: styles.css
```css
* {
  box-sizing: border-box;
}

body {
  position: relative;
  margin: 0;
  min-height: 100vh;
  overflow: hidden;
  font-family: Roboto, "Liberation Sans", sans-serif;
  color: #fff;
  background:
    radial-gradient(circle at 0 0, #10181f, transparent 40%),
    radial-gradient(circle at 100% 100%, #0d141b, transparent 50%),
    linear-gradient(90deg, #162532, #141c29 60%, #10171f);
}

p {
  margin: 0;
}

.wallpaper {
  position: absolute;
  inset: 0;
  width: 100%;
  height: 100%;
  fill: none;
  stroke: #4a6d8c;
  stroke-width: 2;
  stroke-linecap: round;
  stroke-linejoin: round;
  opacity: .2;
}

.wallpaper .top {
  stroke-width: 4;
}

.wallpaper .low {
  stroke-width: 5;
}

.wallpaper .detail {
  stroke-width: 5;
}

.chat {
  position: relative;
  display: flex;
  flex-direction: column;
  margin-top: -5px;
}

.bubble {
  position: relative;
  display: flex;
  align-items: flex-end;
  gap: 24px;
  width: fit-content;
  padding: 19px 31px 9px;
}

.text {
  margin-bottom: 9px;
  font-size: 44px;
  line-height: 52px;
}

.blank {
  height: 52px;
}

.bubble-out {
  align-self: flex-end;
  margin-right: 29px;
  padding-right: 18px;
  border-radius: 44px 44px 0 44px;
  background: #8749b5;
}

.bubble-in {
  margin: 18px 18px 10px;
  border-radius: 44px 44px 16px 0;
  background: #222d38;
}

.title {
  display: flex;
  align-items: center;
  gap: 12px;
}

.emoji {
  flex: none;
  width: 50px;
  height: 48px;
}

code {
  font-family: "Noto Sans", sans-serif;
  font-size: 43px;
  line-height: 1;
}

code i {
  display: inline-block;
  width: 25px;
  font-style: normal;
  text-align: center;
}

.meta {
  display: flex;
  align-items: center;
  gap: 12px;
  font-size: 33px;
  line-height: 39px;
}

.bubble-in .meta {
  color: #6f7f8e;
}

.ticks {
  width: 46px;
  height: 28px;
  fill: none;
  stroke: #fff;
  stroke-width: 4;
  stroke-linecap: round;
}

.tail {
  position: absolute;
  bottom: 0;
  width: 16px;
  height: 40px;
}

.tail-out {
  left: 100%;
  fill: #8749b5;
}

.tail-in {
  right: 100%;
  fill: #222d38;
}

.sprites {
  position: absolute;
  width: 0;
  height: 0;
}

.bag-sign {
  font: 500 25px Roboto, sans-serif;
  text-anchor: middle;
  fill: #3d2e20;
}

.mail-sign {
  font: 700 26px Roboto, sans-serif;
  text-anchor: middle;
  fill: #56a7f5;
  filter: drop-shadow(1px 1px 0 #3970a8);
}

.keyboard {
  display: grid;
  grid-template-columns: 1fr 1fr;
  gap: 11px 14px;
  width: calc(100% - 145px);
  margin-left: 16px;
}

.keyboard button {
  display: flex;
  align-items: center;
  justify-content: center;
  gap: 10px;
  min-width: 0;
  height: 121px;
  padding: 0 21px;
  border: 0;
  border-radius: 20px;
  overflow: hidden;
  color: #fff;
  background: rgba(180, 215, 240, .11);
  font: 500 42px/52px Roboto, "Liberation Sans", sans-serif;
  white-space: nowrap;
}

.keyboard .fade {
  justify-content: flex-start;
}

.fade span {
  flex: 1;
  min-width: 0;
  overflow: hidden;
  mask-image: linear-gradient(90deg, #000 calc(100% - 20px), transparent);
}

.keyboard .wide {
  grid-column: 1 / -1;
  border-radius: 20px 20px 50px 50px;
}
```
